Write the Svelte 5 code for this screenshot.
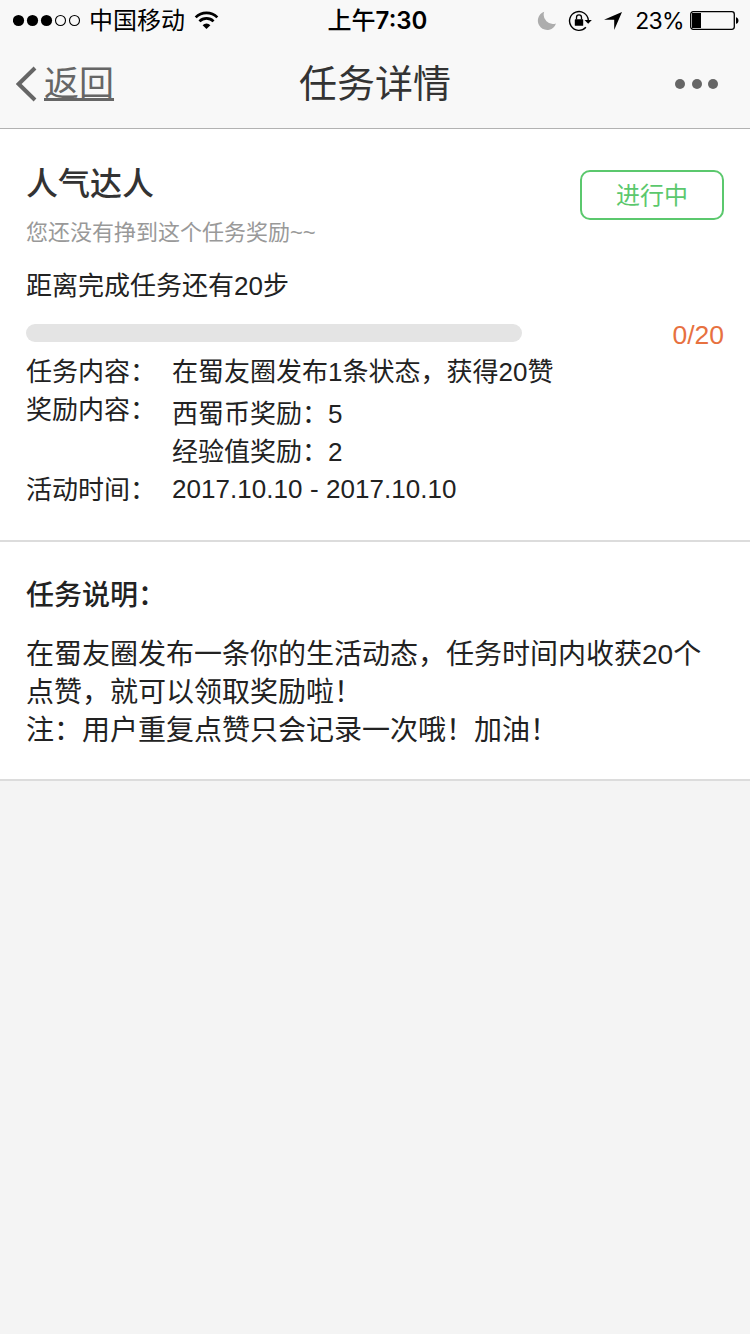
<script lang="ts">
	let title = '任务详情';
	let signal = 3;

	let task = {
		name: '人气达人',
		tip: '您还没有挣到这个任务奖励~~',
		status: '进行中',
		done: 0,
		total: 20,
		content: '在蜀友圈发布1条状态，获得20赞',
		rewards: [
			{ name: '西蜀币奖励', value: 5 },
			{ name: '经验值奖励', value: 2 }
		],
		start: '2017.10.10',
		end: '2017.10.10'
	};

	let notes = [
		'在蜀友圈发布一条你的生活动态，任务时间内收获20个点赞，就可以领取奖励啦！',
		'注：用户重复点赞只会记录一次哦！加油！'
	];

	$: percent = (task.done / task.total) * 100;
</script>

<header>
	<div class="status">
		<div class="left">
			<svg class="signal" width="68" height="14" viewBox="0 0 68 14">
				{#each Array(5) as _, i}
					{#if i < signal}
						<circle cx={5.5 + i * 14} cy="6.5" r="5.6" />
					{:else}
						<circle cx={5.5 + i * 14} cy="6.5" r="5" fill="none" stroke="#000" stroke-width="1.1" />
					{/if}
				{/each}
			</svg>
			<span class="carrier">中国移动</span>
			<svg class="wifi" width="25" height="19" viewBox="0 0 26 20">
				<g fill="none" stroke="#000" stroke-width="2.9">
					<path d="M1.6 6.7a16.2 16.2 0 0 1 22.8 0" />
					<path d="M5.6 10.9a10.5 10.5 0 0 1 14.8 0" />
				</g>
				<path d="M8.9 14.9a5.8 5.8 0 0 1 8.2 0L13 19z" />
			</svg>
		</div>
		<div class="time">上午<b>7:30</b></div>
		<div class="right">
			<svg class="moon" width="20" height="20" viewBox="0 0 20 20">
				<path d="M7.2 .8A9.3 9.3 0 1 0 19 12.5A9.3 9.3 0 0 1 7.2 .8z" fill="#adadad" />
			</svg>
			<svg class="lock" width="24" height="22" viewBox="0 0 24 22">
				<path
					d="M17.9 17.3A9.4 9.4 0 1 1 20.3 10"
					fill="none"
					stroke="#000"
					stroke-width="1.4"
				/>
				<path d="M16.5 10h7.3l-3.6 3.8z" />
				<rect x="6.8" y="9.3" width="8.4" height="6.5" rx=".6" />
				<path d="M8.5 9.6V7.4a2.5 2.5 0 0 1 5 0v2.2" fill="none" stroke="#000" stroke-width="1.3" />
			</svg>
			<svg class="arrow" width="18" height="18" viewBox="0 0 18 18">
				<path d="M18 0L10.2 18V7.8H0z" />
			</svg>
			<span class="power">23%</span>
			<svg class="battery" width="49" height="20" viewBox="0 0 49 20">
				<rect x=".7" y=".7" width="43.6" height="17.6" rx="2.5" fill="none" stroke="#000" stroke-width="1.3" />
				<rect x="2" y="2" width="9" height="15" />
				<path d="M46 6.2c3.3.4 3.3 6.2 0 6.6z" />
			</svg>
		</div>
	</div>

	<nav>
		<a class="back" href="#back">
			<svg width="21" height="36" viewBox="0 0 21 36">
				<path d="M19 2L2.7 18L19 34" fill="none" stroke="#666" stroke-width="4" />
			</svg>
			<span>返回</span>
		</a>
		<h1>{title}</h1>
		<div class="more"><i></i><i></i><i></i></div>
	</nav>
</header>

<section class="task">
	<div class="head">
		<div>
			<h2>{task.name}</h2>
			<p class="tip">{task.tip}</p>
		</div>
		<button>{task.status}</button>
	</div>
	<p>距离完成任务还有{task.total - task.done}步</p>
	<div class="progress">
		<div class="bar"><div class="fill" style="width: {percent}%"></div></div>
		<span>{task.done}/{task.total}</span>
	</div>
	<dl>
		<dt>任务内容：</dt>
		<dd>{task.content}</dd>
		<dt>奖励内容：</dt>
		<dd class="rewards">
			{#each task.rewards as reward}
				<div>{reward.name}：{reward.value}</div>
			{/each}
		</dd>
		<dt>活动时间：</dt>
		<dd class="date">{task.start} - {task.end}</dd>
	</dl>
</section>

<section class="notes">
	<h3>任务说明：</h3>
	{#each notes as note}
		<p>{note}</p>
	{/each}
</section>

<style>
	:global(body) {
		background: #f4f4f4;
		color: #222;
		font-family: 'Liberation Sans', 'Noto Sans CJK SC', sans-serif;
		font-size: 26px;
		line-height: 38px;
	}
	h1,
	h2,
	h3,
	p,
	dl,
	dd {
		margin: 0;
	}
	svg {
		display: block;
		flex: none;
	}

	header {
		height: 129px;
		box-sizing: border-box;
		background: #f8f8f8;
		border-bottom: 1px solid #b2b2b2;
	}
	.status {
		height: 40px;
		padding: 0 11px 0 13px;
		display: grid;
		grid-template-columns: 1fr auto 1fr;
		color: #000;
		font-size: 24px;
		line-height: 42px;
	}
	.left,
	.right {
		display: flex;
		align-items: center;
		height: 41px;
	}
	.right {
		justify-content: flex-end;
	}
	.carrier {
		margin: 0 9px 0 8px;
	}
	.time {
		padding-left: 3px;
		font-weight: 500;
	}
	.time b {
		font-family: Inter, sans-serif;
		font-weight: 600;
		font-size: 24px;
	}
	.moon {
		margin-right: 11px;
	}
	.lock {
		margin-right: 12px;
	}
	.arrow {
		margin-right: 13px;
	}
	.power {
		margin-right: 6px;
		font-family: Inter, sans-serif;
		font-size: 23px;
		letter-spacing: -0.7px;
	}

	nav {
		height: 88px;
		padding: 0 16px;
		display: grid;
		grid-template-columns: 1fr auto 1fr;
		align-items: center;
		line-height: 88px;
	}
	.back {
		display: flex;
		align-items: center;
		gap: 7px;
		color: #666;
		font-size: 35px;
		text-decoration: none;
	}
	.back span {
		text-decoration: underline;
		text-decoration-thickness: 3px;
		text-decoration-skip-ink: none;
	}
	h1 {
		color: #333;
		font-size: 38px;
		font-weight: 400;
	}
	.more {
		display: flex;
		justify-content: flex-end;
		gap: 6.5px;
		padding-right: 16px;
	}
	.more i {
		width: 10px;
		height: 10px;
		border-radius: 50%;
		background: #666;
	}

	section {
		padding: 0 26px;
		background: #fff;
		border-bottom: 2px solid #dcdcdc;
	}
	.task {
		padding-top: 32px;
		padding-bottom: 31px;
	}
	.head {
		display: flex;
		justify-content: space-between;
		align-items: flex-start;
		height: 106px;
	}
	h2 {
		color: #333;
		font-size: 32px;
		font-weight: 500;
		line-height: 46px;
	}
	.tip {
		margin-top: 10px;
		color: #999;
		font-size: 22px;
		line-height: 32px;
	}
	button {
		width: 144px;
		height: 50px;
		margin-top: 9px;
		padding: 2px 0 0;
		border: 2px solid #5bc86d;
		border-radius: 10px;
		background: #fff;
		color: #5bc86d;
		font: inherit;
		font-size: 24px;
	}
	.progress {
		display: flex;
		justify-content: space-between;
		height: 38px;
		margin: 11px 0 -1px;
	}
	.progress span {
		color: #e7713f;
		font-size: 26.5px;
	}
	.bar {
		width: 496px;
		height: 18px;
		margin-top: 8px;
		border-radius: 9px;
		background: #e4e4e4;
		overflow: hidden;
	}
	.fill {
		height: 100%;
		background: #e7713f;
	}
	dl {
		display: grid;
		grid-template-columns: 146px 1fr;
	}
	.rewards {
		padding-top: 4px;
	}
	.date {
		line-height: 36px;
		letter-spacing: 0.05px;
	}

	.notes {
		padding-top: 35px;
		padding-bottom: 29px;
		font-size: 28px;
	}
	h3 {
		margin-bottom: 21px;
		font-size: 28px;
		font-weight: 500;
	}
</style>
